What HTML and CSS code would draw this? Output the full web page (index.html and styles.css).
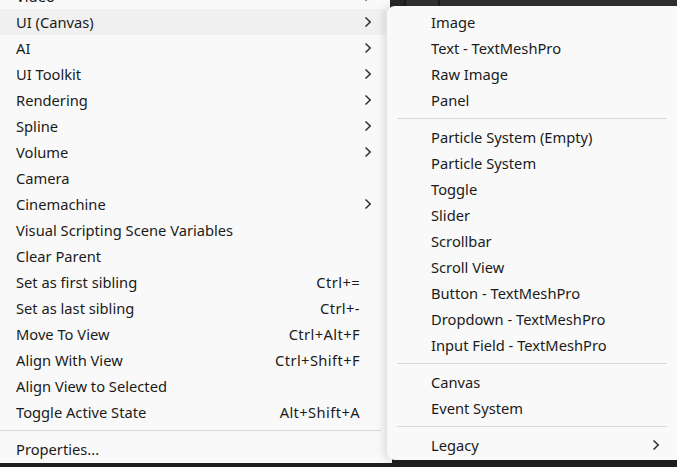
FILE: index.html
```html
<!DOCTYPE html>
<html lang="en">
<head>
  <meta charset="UTF-8">
  <title>GameObject Menu</title>
  <link rel="stylesheet" href="styles.css">
</head>
<body>
  <div class="toolbar-edge">
    <span class="tb-cell tb-first"></span>
    <span class="tb-cell"></span>
  </div>

  <!-- main context menu -->
  <ul class="menu main-menu">
    <li class="item sub"><span class="label">Video</span><svg class="chev" viewBox="0 0 8 12"><path d="M1.5 1.5 L6.2 6 L1.5 10.5"/></svg></li>
    <li class="item sub active"><span class="label">UI (Canvas)</span><svg class="chev" viewBox="0 0 8 12"><path d="M1.5 1.5 L6.2 6 L1.5 10.5"/></svg></li>
    <li class="item sub"><span class="label">AI</span><svg class="chev" viewBox="0 0 8 12"><path d="M1.5 1.5 L6.2 6 L1.5 10.5"/></svg></li>
    <li class="item sub"><span class="label">UI Toolkit</span><svg class="chev" viewBox="0 0 8 12"><path d="M1.5 1.5 L6.2 6 L1.5 10.5"/></svg></li>
    <li class="item sub"><span class="label">Rendering</span><svg class="chev" viewBox="0 0 8 12"><path d="M1.5 1.5 L6.2 6 L1.5 10.5"/></svg></li>
    <li class="item sub"><span class="label">Spline</span><svg class="chev" viewBox="0 0 8 12"><path d="M1.5 1.5 L6.2 6 L1.5 10.5"/></svg></li>
    <li class="item sub"><span class="label">Volume</span><svg class="chev" viewBox="0 0 8 12"><path d="M1.5 1.5 L6.2 6 L1.5 10.5"/></svg></li>
    <li class="item"><span class="label">Camera</span></li>
    <li class="item sub"><span class="label">Cinemachine</span><svg class="chev" viewBox="0 0 8 12"><path d="M1.5 1.5 L6.2 6 L1.5 10.5"/></svg></li>
    <li class="item"><span class="label">Visual Scripting Scene Variables</span></li>
    <li class="item"><span class="label">Clear Parent</span></li>
    <li class="item"><span class="label">Set as first sibling</span><span class="key">Ctrl+=</span></li>
    <li class="item"><span class="label">Set as last sibling</span><span class="key">Ctrl+-</span></li>
    <li class="item"><span class="label">Move To View</span><span class="key">Ctrl+Alt+F</span></li>
    <li class="item"><span class="label">Align With View</span><span class="key">Ctrl+Shift+F</span></li>
    <li class="item"><span class="label">Align View to Selected</span></li>
    <li class="item"><span class="label">Toggle Active State</span><span class="key">Alt+Shift+A</span></li>
    <li class="sep"></li>
    <li class="item"><span class="label">Properties...</span></li>
  </ul>

  <!-- UI (Canvas) submenu -->
  <ul class="menu submenu">
    <li class="item"><span class="label">Image</span></li>
    <li class="item"><span class="label">Text - TextMeshPro</span></li>
    <li class="item"><span class="label">Raw Image</span></li>
    <li class="item"><span class="label">Panel</span></li>
    <li class="sep"></li>
    <li class="item"><span class="label">Particle System (Empty)</span></li>
    <li class="item"><span class="label">Particle System</span></li>
    <li class="item"><span class="label">Toggle</span></li>
    <li class="item"><span class="label">Slider</span></li>
    <li class="item"><span class="label">Scrollbar</span></li>
    <li class="item"><span class="label">Scroll View</span></li>
    <li class="item"><span class="label">Button - TextMeshPro</span></li>
    <li class="item"><span class="label">Dropdown - TextMeshPro</span></li>
    <li class="item"><span class="label">Input Field - TextMeshPro</span></li>
    <li class="sep"></li>
    <li class="item"><span class="label">Canvas</span></li>
    <li class="item"><span class="label">Event System</span></li>
    <li class="sep"></li>
    <li class="item sub"><span class="label">Legacy</span><svg class="chev" viewBox="0 0 8 12"><path d="M1.5 1.5 L6.2 6 L1.5 10.5"/></svg></li>
  </ul>
</body>
</html>
```

FILE: styles.css
```css
html, body {
  margin: 0;
  height: 100%;
}
body {
  position: relative;
  overflow: hidden;
  background: #1f1f1f;
  font-family: "Noto Sans", "Open Sans", sans-serif;
  font-size: 14.7px;
  color: #1b1b1b;
}

/* dark editor toolbar peeking above the submenu */
.toolbar-edge {
  position: absolute;
  left: 390px;
  top: 0;
  right: 0;
  height: 8px;
  background: #303030;
  display: flex;
}
.tb-cell {
  width: 32px;
  border-right: 2px solid #1c1c1c;
}
.tb-first {
  width: 14px;
  background: #262626;
}

.menu {
  list-style: none;
  margin: 0;
  padding: 0;
  background: #f9f9f9;
}
.item {
  display: flex;
  align-items: center;
  height: 26px;
  white-space: nowrap;
}
.item .label {
  flex: 1;
}
.key {
  color: #1b1b1b;
  letter-spacing: 0.4px;
}
.chev {
  width: 8px;
  height: 12px;
  fill: none;
  stroke: #2e2e2e;
  stroke-width: 1.5;
}
.sep {
  height: 1px;
  background: #d9d9d9;
}

.main-menu {
  width: 392px;
  height: 480px;
  margin-top: -17px;
}
.main-menu .item {
  padding: 0 14px 0 16px;
  margin-right: 6px;
  border-radius: 0 4px 4px 0;
}
.main-menu .item.active {
  background: #f0f0f0;
}
.main-menu .key {
  margin-right: 12px;
}
.main-menu .sep {
  margin: 5px 11px 5px 0;
}

.submenu {
  position: absolute;
  left: 387px;
  top: 6px;
  width: 300px;
  padding-top: 3px;
  height: 451px;
  border-radius: 8px 0 0 8px;
  box-shadow: -3px 0 8px rgba(0, 0, 0, 0.12);
}
.submenu .item {
  padding: 0 27px 0 44px;
}
.submenu .sep {
  margin: 5px 20px 5px 10px;
}
```
